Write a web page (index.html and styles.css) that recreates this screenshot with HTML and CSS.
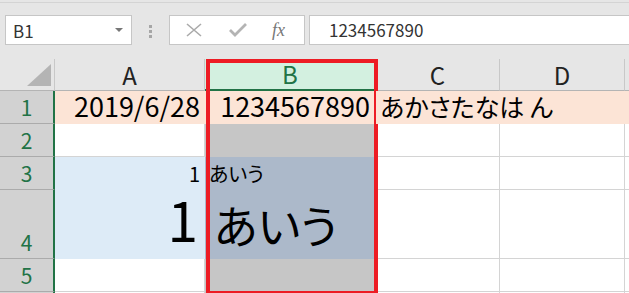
FILE: index.html
```html
<!DOCTYPE html>
<html lang="ja">
<head>
  <meta charset="UTF-8" />
  <title>Book1 - Excel</title>
  <link rel="stylesheet" href="styles.css">
</head>
<body>

  <div class="toolbar">
    <div class="namebox">
      <span>B1</span>
      <svg class="drop" width="8" height="4" viewBox="0 0 8 4"><path d="M0 0H8L4 4Z" fill="#777"/></svg>
    </div>
    <div class="grip"><i></i><i></i><i></i></div>
    <div class="fx-buttons">
      <svg width="16" height="14" viewBox="0 0 16 14"><path d="M1 1L15 13M15 1L1 13" stroke="#aaa" stroke-width="1.6" fill="none"/></svg>
      <svg width="18" height="14" viewBox="0 0 18 14"><path d="M1 7L6 12L17 1" stroke="#b4b4b4" stroke-width="2.8" fill="none"/></svg>
      <span class="fx">fx</span>
    </div>
    <div class="formula">1234567890</div>
  </div>

  <div class="sheet">
    <!-- header -->
    <div class="corner"><span class="tri"></span></div>
    <div class="colhead">A</div>
    <div class="colhead active">B</div>
    <div class="colhead">C</div>
    <div class="colhead">D</div>
    <div class="colhead last"></div>

    <!-- row 1 -->
    <div class="rowhead">1</div>
    <div class="cell peach r1 right">2019/6/28</div>
    <div class="cell peach r1 right pad5">1234567890</div>
    <div class="cell peach r1 spill">あかさたなは ん</div>
    <div class="cell peach r1"></div>
    <div class="cell peach r1"></div>

    <!-- row 2 -->
    <div class="rowhead">2</div>
    <div class="cell"></div>
    <div class="cell sel"></div>
    <div class="cell"></div>
    <div class="cell"></div>
    <div class="cell"></div>

    <!-- row 3 -->
    <div class="rowhead">3</div>
    <div class="cell blue small right nobottom">1</div>
    <div class="cell selblue small nobottom">あいう</div>
    <div class="cell"></div>
    <div class="cell"></div>
    <div class="cell"></div>

    <!-- row 4 -->
    <div class="rowhead">4</div>
    <div class="cell blue big right">1</div>
    <div class="cell selblue bigkana">あいう</div>
    <div class="cell"></div>
    <div class="cell"></div>
    <div class="cell"></div>

    <!-- row 5 -->
    <div class="rowhead">5</div>
    <div class="cell"></div>
    <div class="cell sel"></div>
    <div class="cell"></div>
    <div class="cell"></div>
    <div class="cell"></div>

    <!-- row 6, only its top edge shows -->
    <div class="rowhead"></div>
    <div class="cell"></div>
    <div class="cell sel"></div>
    <div class="cell"></div>
    <div class="cell"></div>
    <div class="cell"></div>

    <div class="highlight"></div>
  </div>

</body>
</html>
```

FILE: styles.css
```css
body {
  margin: 0;
  width: 629px;
  height: 293px;
  overflow: hidden;
  background: #e6e6e6;
  font-family: "Noto Sans CJK JP", "Noto Sans", sans-serif;
}

.toolbar {
  height: 57px;
  box-sizing: border-box;
  border-top: 1px solid #d4d4d4;
  margin-top: 2px;
  padding: 12px 0 0 5px;
  display: flex;
  align-items: flex-start;
}

.namebox {
  width: 127px;
  height: 30px;
  box-sizing: border-box;
  background: #fff;
  border: 1px solid #c6c6c6;
  display: flex;
  align-items: center;
  padding: 0 8px 0 7px;
  font-size: 17px;
  color: #333;
}

.namebox span {
  flex: 1;
}

.grip {
  width: 3px;
  margin: 10px 0 0 17px;
  display: flex;
  flex-direction: column;
  gap: 2px;
}

.grip i {
  width: 3px;
  height: 3px;
  background: #a6a6a6;
}

.fx-buttons {
  margin-left: 17px;
  width: 136px;
  height: 30px;
  box-sizing: border-box;
  background: #fff;
  border: 1px solid #c6c6c6;
  display: flex;
  align-items: center;
  padding-left: 16px;
  gap: 27px;
}

.fx {
  font-family: "Liberation Serif", serif;
  font-style: italic;
  font-size: 18px;
  color: #777;
  margin-left: -2px;
}

.formula {
  margin-left: 4px;
  flex: 1;
  height: 30px;
  box-sizing: border-box;
  background: #fff;
  border: 1px solid #c6c6c6;
  border-right: none;
  padding-left: 19px;
  font-size: 17px;
  line-height: 28px;
  color: #333;
}

.sheet {
  position: relative;
  display: grid;
  grid-template-columns: 55px 150px 171px 124px 125px 4px;
  grid-template-rows: 32px 33px 33px 33px 69px 33px 33px;
  background: #fff;
}

.corner {
  position: relative;
  background: #e6e6e6;
  border-right: 1px solid #c8c8c8;
  border-bottom: 1px solid #b4b4b4;
}

.tri {
  position: absolute;
  right: 3px;
  bottom: 4px;
  width: 0;
  height: 0;
  border-left: 24px solid transparent;
  border-bottom: 22px solid #b4b4b4;
}

.colhead {
  background: #e6e6e6;
  border-right: 1px solid #c8c8c8;
  border-bottom: 1px solid #b4b4b4;
  display: flex;
  justify-content: center;
  align-items: center;
  font-size: 24px;
  line-height: 1;
  color: #222;
}

.colhead.active {
  background: #d3f0e0;
  color: #217346;
  border-bottom: 2px solid #217346;
}

.colhead.last {
  border-right: none;
}

.rowhead {
  background: #d2d2d2;
  border-right: 2px solid #217346;
  border-bottom: 1px solid #ababab;
  display: flex;
  justify-content: center;
  align-items: flex-end;
  font-size: 21px;
  line-height: 1;
  padding-bottom: 5px;
  color: #217346;
}

.cell {
  border-right: 1px solid #d4d4d4;
  border-bottom: 1px solid #d4d4d4;
  display: flex;
  align-items: flex-end;
  white-space: nowrap;
  color: #000;
  line-height: 1;
  font-feature-settings: "palt";
  padding: 0 4px 5px;
  min-width: 0;
}

.right {
  justify-content: flex-end;
}

.pad5 {
  padding-right: 5px;
}

.r1 {
  font-size: 27px;
  padding-bottom: 4px;
}

.peach {
  background: #fce4d6;
  border-color: #fce4d6;
}

.spill {
  font-size: 25px;
  overflow: visible;
  position: relative;
  z-index: 1;
}

.sel {
  background: #c6c6c6;
  border-color: #c6c6c6;
}

.blue {
  background: #ddebf7;
  border-color: #ddebf7;
}

.selblue {
  background: #acb9ca;
  border-color: #acb9ca;
}

.nobottom {
  border-bottom: none;
}

.small {
  font-size: 20px;
  padding-bottom: 6px;
}

.big {
  font-size: 55px;
  padding-right: 6px;
  padding-bottom: 12px;
}

.bigkana {
  font-size: 45px;
  padding-left: 9px;
  padding-bottom: 11px;
}

.highlight {
  position: absolute;
  left: 206px;
  top: 0;
  width: 172px;
  height: 236px;
  box-sizing: border-box;
  border: 4px solid #ed1c24;
  pointer-events: none;
}
```
